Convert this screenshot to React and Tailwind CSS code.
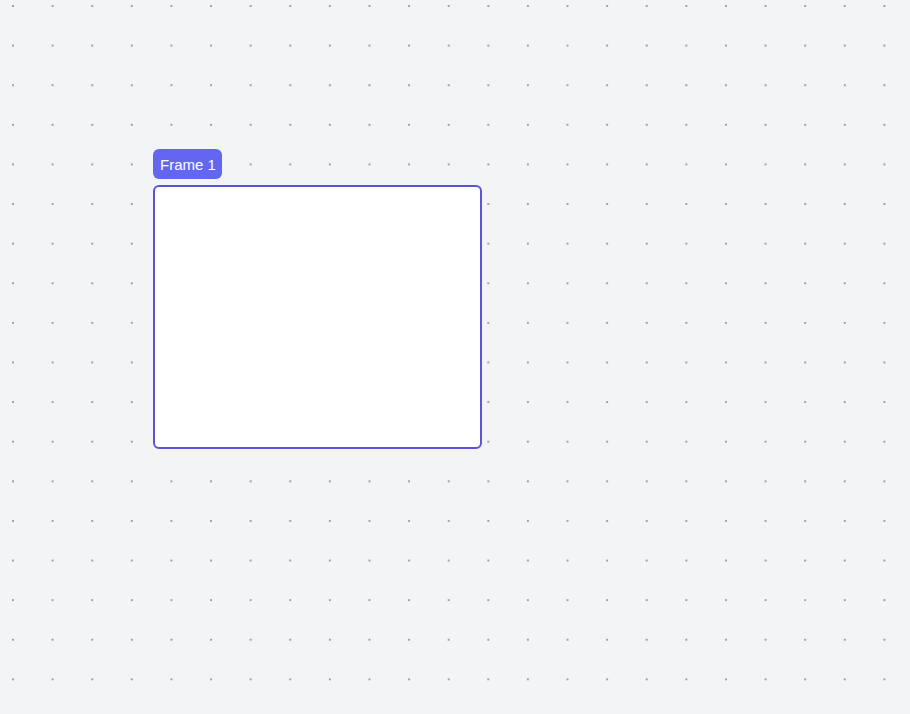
export default function App() {
  return (
    <div
      className="relative w-full h-[714px] overflow-hidden bg-[#f3f4f6] bg-[radial-gradient(circle_at_1px_1px,#9ca3af_0.8px,transparent_1px)] bg-size-[39.62px_39.62px] bg-position-[12px_5px]"
      style={{ fontFamily: '"Liberation Sans", Arial, sans-serif' }}
    >
      <div className="absolute left-[153px] top-[149px] flex flex-col items-start gap-[6px]">
        <div className="h-[30px] pl-[7px] pr-[6px] flex items-center rounded-[6px] bg-[#6366f1] text-white text-[15px] leading-none">
          Frame 1
        </div>
        <div className="w-[329px] h-[264px] bg-white border-2 border-[#5b54d6] rounded-[6px]" />
      </div>
    </div>
  );
}
